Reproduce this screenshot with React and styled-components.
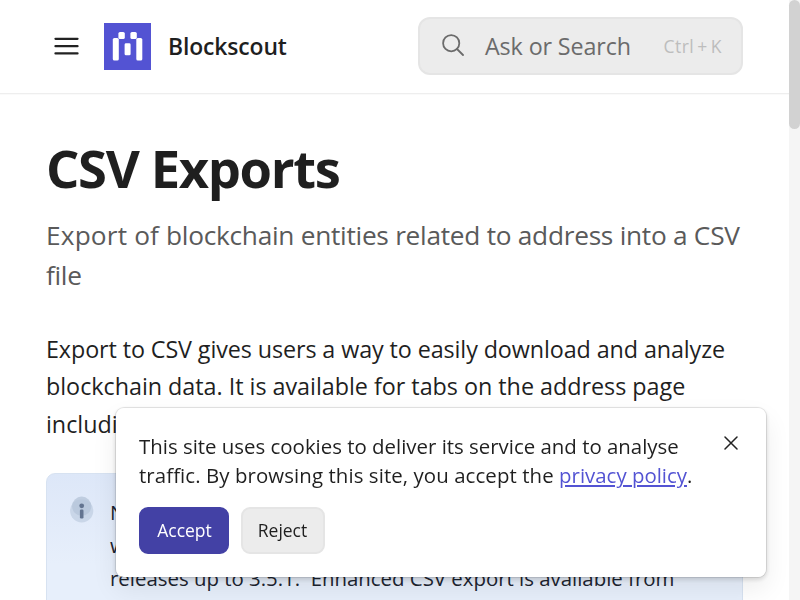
import React from 'react';
import styled, { createGlobalStyle } from 'styled-components';

const Global = createGlobalStyle`
  * { box-sizing: border-box; }
  html, body { margin: 0; overflow: hidden; }
  body { background: #fff; color: #1f1f1f; font-family: "Open Sans", "Noto Sans", sans-serif; }
`;

const Page = styled.div`
  display: flex;
  width: 800px;
  height: 600px;
  overflow: hidden;
`;

const Content = styled.div`
  width: 789px;
  height: 600px;
  overflow: hidden;
`;

const ScrollTrack = styled.div`
  width: 11px;
  height: 600px;
  background: #f5f5f5;
`;

const ScrollThumb = styled.div`
  height: 129px;
  border-radius: 6px;
  background: #d2d2d2;
`;

const Header = styled.header`
  display: flex;
  align-items: center;
  height: 94px;
  padding: 0 46px 1px 54px;
  border-bottom: 1px solid #eeeeee;
  box-shadow: 0 1px 0 #fafafa;
`;

const MenuIcon = styled.svg`
  width: 25px;
  height: 20px;
`;

const Logo = styled.svg`
  width: 47px;
  height: 47px;
  margin-left: 25px;
`;

const Brand = styled.div`
  margin-left: 17px;
  padding-top: 2px;
  font-size: 22.9px;
  font-weight: 600;
  line-height: 32px;
  letter-spacing: -0.12px;
`;

const Search = styled.div`
  display: flex;
  align-items: center;
  width: 325px;
  height: 58px;
  margin-left: auto;
  padding: 0 19px 0 23px;
  border: 2px solid #e5e5e5;
  border-radius: 12px;
  background: #ececec;
  color: #6b6b6b;
`;

const SearchIcon = styled.svg`
  width: 22px;
  height: 22px;
  margin: -2px 0 0 -1px;
`;

const Placeholder = styled.span`
  margin-left: 21px;
  font-size: 23.3px;
  line-height: 32px;
  letter-spacing: -0.12px;
  white-space: nowrap;
`;

const Shortcut = styled.kbd`
  display: flex;
  gap: 3px;
  margin-left: auto;
  font: 17.5px "Open Sans", "Noto Sans", sans-serif;
  letter-spacing: 0.5px;
  color: #bdbdbd;
`;

const Main = styled.main`
  padding: 37px 46px 0;
`;

const Title = styled.h1`
  margin: 0;
  font-size: 52.5px;
  font-weight: 700;
  line-height: 74px;
  letter-spacing: -1.36px;
`;

const Line = styled.span`
  display: block;
  letter-spacing: ${(p) => p.$track || 0}px;
  white-space: pre;
`;

const Run = styled.span`
  letter-spacing: ${(p) => p.$track}px;
`;

const Lead = styled.p`
  margin: 10px 0 0;
  font-size: 26.25px;
  line-height: 40px;
  color: #5a5a5a;
`;

const Paragraph = styled.p`
  margin: 36px 0 0;
  font-size: 23.33px;
  line-height: 37.4px;
`;

const Hint = styled.aside`
  display: flex;
  height: 200px;
  margin-top: 29.8px;
  padding: 22px;
  border: 1px solid #d7e2f1;
  border-radius: 9px;
  background: linear-gradient(#dde7f8, #e7effb 90px, #e7effb);
`;

const InfoIcon = styled.svg`
  flex: none;
  width: 24px;
  height: 27px;
  margin-left: 1px;
`;

const HintText = styled.p`
  margin: 0 0 0 16px;
  font-size: 20.4px;
  line-height: 33px;
  color: #1c2430;
  white-space: pre;
`;

const CookieDialog = styled.section`
  position: fixed;
  left: 115px;
  top: 407px;
  width: 652px;
  height: 171px;
  padding: 24px 23px;
  border: 1px solid rgba(0, 0, 0, 0.09);
  border-radius: 9px;
  background: #fff;
  background-clip: padding-box;
  box-shadow: 0 2px 4px rgba(0, 0, 0, 0.13), 0 12px 26px rgba(0, 0, 0, 0.07);
`;

const CookieText = styled.p`
  margin: 0;
  font-size: 20.42px;
  line-height: 29.2px;
`;

const PolicyLink = styled.a`
  color: #5353d3;
  letter-spacing: 0;
  text-decoration: underline;
  text-decoration-thickness: 2px;
  text-underline-offset: 2px;
`;

const Actions = styled.div`
  display: flex;
  gap: 12px;
  margin-top: 17px;
`;

const Button = styled.button`
  width: ${(p) => (p.$primary ? 90 : 84)}px;
  height: 47px;
  padding: ${(p) => (p.$primary ? '0 0 2px 1px' : '0 1px 2px 0')};
  border: 2px solid ${(p) => (p.$primary ? '#4341a5' : '#e5e5e5')};
  border-radius: 9px;
  background: ${(p) => (p.$primary ? '#4341a5' : '#ececec')};
  color: ${(p) => (p.$primary ? '#fff' : '#1f1f1f')};
  font: 17.5px "Open Sans", "Noto Sans", sans-serif;
`;

const CloseIcon = styled.svg`
  position: absolute;
  top: 28px;
  right: 28px;
  width: 14px;
  height: 14px;
`;

export default function App() {
  return (
    <Page>
      <Global />
      <Content>
        <Header>
          <MenuIcon viewBox="0 0 25 20" stroke="#222" strokeWidth="2.3" strokeLinecap="round">
            <path d="M1.5 2.8h22M1.5 10.2h22M1.5 17.4h22" />
          </MenuIcon>
          <Logo viewBox="0 0 47 47" fill="#fff">
            <path fill="#5353d3" d="M0 0h47v47H0z" />
            <rect x="8.8" y="15" width="6" height="22.6" rx="1.6" />
            <rect x="14.4" y="9" width="6.4" height="7" rx="1.6" />
            <rect x="26.4" y="9" width="6.4" height="7" rx="1.6" />
            <rect x="32.3" y="15" width="6" height="22.6" rx="1.6" />
            <rect x="20.6" y="20.3" width="6" height="12" rx="1.4" />
          </Logo>
          <Brand>Blockscout</Brand>
          <Search>
            <SearchIcon viewBox="0 0 22 22" fill="none" stroke="#6b6b6b" strokeWidth="1.8" strokeLinecap="round">
              <circle cx="9.2" cy="9.2" r="8.1" />
              <path d="M15 15l6 6" />
            </SearchIcon>
            <Placeholder>Ask or Search</Placeholder>
            <Shortcut><span>Ctrl</span><span>+</span><span>K</span></Shortcut>
          </Search>
        </Header>
        <Main>
          <Title>CSV Exports</Title>
          <Lead>
            <Line $track={-0.27}><Run $track={0.15}>Export of </Run>blockchain entities related to address into a CSV</Line>
            <Line $track={-0.3}>file</Line>
          </Lead>
          <Paragraph>
            <Line $track={-0.1}>Export to CSV gives users a way to easily download and analyze</Line>
            <Line $track={-0.02}>blockchain data. It is available for tabs on the address page</Line>
            <Line $track={-0.02}>including:</Line>
          </Paragraph>
          <Hint>
            <InfoIcon viewBox="0 0 24 27">
              <circle cx="11.7" cy="14.8" r="11.6" fill="#c9d6e8" />
              <circle cx="11.7" cy="10.2" r="9.6" fill="#b7c5d9" opacity="0.8" />
              <circle cx="11.7" cy="9.8" r="2.4" fill="#637490" />
              <rect x="9.9" y="13.6" width="3.6" height="8.8" rx="1.2" fill="#637490" />
            </InfoIcon>
            <HintText>{'Note:\nwith\nreleases up to 3.5.1.  Enhanced CSV export is available from'}</HintText>
          </Hint>
        </Main>
      </Content>
      <ScrollTrack><ScrollThumb /></ScrollTrack>
      <CookieDialog>
        <CookieText>
          <Line>This site uses cookies to deliver its service and to analyse</Line>
          <Line $track={0.085}>{'traffic. By browsing this site, you accept the '}<PolicyLink>privacy policy</PolicyLink>.</Line>
        </CookieText>
        <Actions>
          <Button $primary>Accept</Button>
          <Button>Reject</Button>
        </Actions>
        <CloseIcon viewBox="0 0 14 14" stroke="#222" strokeWidth="1.5" strokeLinecap="round">
          <path d="M1 1l12 12M13 1L1 13" />
        </CloseIcon>
      </CookieDialog>
    </Page>
  );
}
